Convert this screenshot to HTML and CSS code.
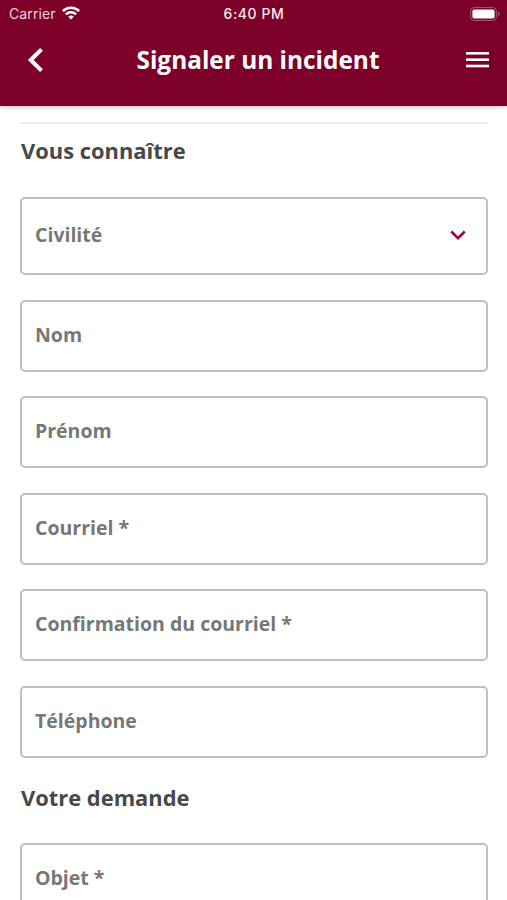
FILE: index.html
```html
<!DOCTYPE html>
<html lang="fr">
<head>
    <meta charset="UTF-8">
    <meta name="viewport" content="width=device-width, initial-scale=1.0">
    <title>Signaler un incident</title>
    <link rel="stylesheet" href="styles.css">
</head>
<body>
    <header class="header">
        <div class="status-bar">
            <div class="carrier">
                <span class="carrier-name">Carrier</span>
                <svg class="wifi" width="18" height="14" viewBox="0 0 18 14" fill="none" stroke="#fff" stroke-width="2.5">
                    <path d="M0.9 5.1a11.5 11.5 0 0 1 16.2 0"/>
                    <path d="M3.9 8.3a7.2 7.2 0 0 1 10.2 0"/>
                    <path d="M9 13.6L6.2 10.8a4 4 0 0 1 5.6 0z" fill="#fff" stroke="none"/>
                </svg>
            </div>
            <span class="time">6:40 PM</span>
            <svg class="battery" width="31" height="14" viewBox="0 0 31 14">
                <rect x="0.6" y="0.6" width="25.8" height="12.8" rx="3.6" fill="none" stroke="#a85c75" stroke-width="1"/>
                <rect x="2.4" y="2.4" width="22.2" height="9.2" rx="2" fill="#fff"/>
                <path d="M28 4.8v4.4c1-.4 1.6-1.2 1.6-2.2S29 5.2 28 4.8z" fill="#a85c75"/>
            </svg>
        </div>
        <div class="nav-bar">
            <button class="icon-button" aria-label="Retour">
                <svg width="17" height="26" viewBox="0 0 17 26" fill="none" stroke="#fff" stroke-width="4">
                    <path d="M14.5 2.4L3.7 13l10.8 10.6"/>
                </svg>
            </button>
            <h1 class="title">Signaler un incident</h1>
            <button class="icon-button" aria-label="Menu">
                <svg width="23" height="16" viewBox="0 0 23 16" fill="#fff">
                    <rect x="0" y="0" width="23" height="2.6"/>
                    <rect x="0" y="6.4" width="23" height="2.6"/>
                    <rect x="0" y="12.7" width="23" height="2.6"/>
                </svg>
            </button>
        </div>
    </header>

    <main class="content">
        <hr class="separator">
        <h2 class="section-title">Vous connaître</h2>
        <form class="fields">
            <div class="field field-select">
                <span>Civilité</span>
                <svg width="16" height="10" viewBox="0 0 16 10" fill="none" stroke="#a3003f" stroke-width="2.6">
                    <path d="M1.3 1.5L8 8.1l6.7-6.6"/>
                </svg>
            </div>
            <div class="field">Nom</div>
            <div class="field">Prénom</div>
            <div class="field">Courriel *</div>
            <div class="field">Confirmation du courriel *</div>
            <div class="field">Téléphone</div>
        </form>
        <h2 class="section-title">Votre demande</h2>
        <form class="fields">
            <div class="field">Objet *</div>
        </form>
    </main>
</body>
</html>
```

FILE: styles.css
```css
* {
    box-sizing: border-box;
}

body {
    margin: 0;
    height: 900px;
    overflow: hidden;
    display: flex;
    flex-direction: column;
    background-color: #fff;
    font-family: "Open Sans", sans-serif;
}

.header {
    flex: none;
    height: 106px;
    background-color: #7c0029;
    color: #fff;
    box-shadow: 0 1px 5px rgba(0, 0, 0, 0.25);
}

.status-bar {
    display: grid;
    grid-template-columns: 1fr auto 1fr;
    align-items: center;
    height: 27px;
    padding: 0 6px 0 9px;
    font-family: Inter, sans-serif;
    font-size: 14px;
}

.carrier {
    display: flex;
    align-items: center;
    gap: 6px;
    color: #ecd6dd;
}

.carrier-name {
    font-size: 14px;
    letter-spacing: 0.1px;
}

.wifi {
    margin-top: -2px;
}

.time {
    margin-right: 2px;
    font-size: 14px;
    font-weight: 500;
    letter-spacing: 0.6px;
    color: #f6e9ed;
}

.battery {
    justify-self: end;
}

.nav-bar {
    display: flex;
    align-items: center;
    justify-content: space-between;
    height: 65px;
    padding: 0 18px 0 27px;
}

.icon-button {
    display: flex;
    padding: 0;
    border: none;
    background: none;
}

.title {
    margin: 0 0 1px 6px;
    font-size: 24.4px;
    font-weight: 700;
}

.content {
    padding: 16px 19px 0 20px;
}

.separator {
    height: 2px;
    margin: 0;
    border: none;
    background-color: #eceeee;
}

.section-title {
    margin: 0;
    height: 73px;
    padding: 12px 0 0 1px;
    font-size: 21.9px;
    font-weight: 700;
    line-height: 30px;
    color: #484848;
}

.fields {
    display: flex;
    flex-direction: column;
    gap: 24.5px;
}

.fields + .section-title {
    height: 85px;
    padding-top: 25px;
}

.field {
    flex: none;
    height: 72px;
    padding: 0 13px;
    border: 2px solid #c0c0c0;
    border-radius: 5px;
    font-size: 19.5px;
    font-weight: 700;
    line-height: 66px;
    color: #777;
}

.field-select {
    display: flex;
    align-items: center;
    justify-content: space-between;
    height: 78px;
    padding: 0 20px 3px 13px;
}
```
